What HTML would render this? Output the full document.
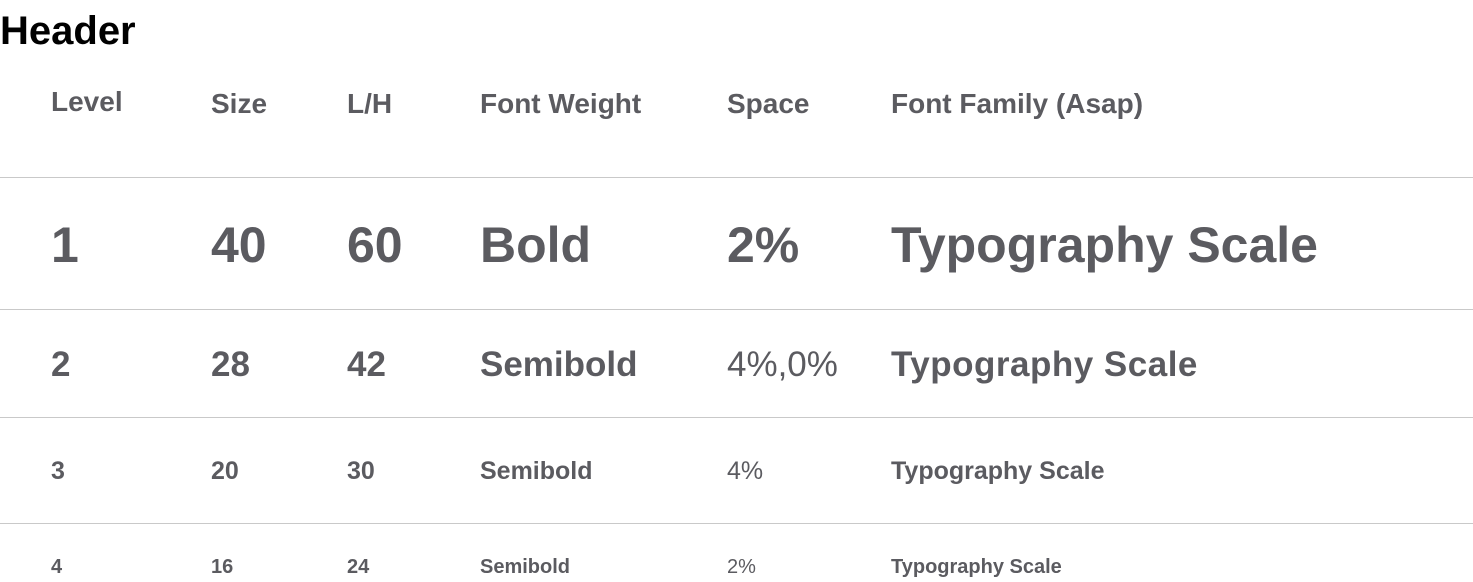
<!DOCTYPE html>
<html><head><meta charset="utf-8"><style>
html,body{margin:0;padding:0;background:#fff;width:1473px;height:582px;overflow:hidden;position:relative;font-family:"Liberation Sans",sans-serif;}
.t{position:absolute;white-space:nowrap;line-height:1.149;font-weight:bold;color:#5b5b60;}
.l{position:absolute;left:0;width:1473px;height:1px;background:#c9c9c9;}
</style></head><body>
<div class="t" style="left:0;top:9px;font-size:40px;color:#000">Header</div>
<div class="l" style="top:177px"></div>
<div class="l" style="top:309px"></div>
<div class="l" style="top:417px"></div>
<div class="l" style="top:523px"></div>
<!-- header row -->
<div style="position:absolute;top:88px;left:0;font-size:28px">
<div class="t" style="left:51px;top:-2px">Level</div>
<div class="t" style="left:211px">Size</div>
<div class="t" style="left:347px">L/H</div>
<div class="t" style="left:480px">Font Weight</div>
<div class="t" style="left:727px">Space</div>
<div class="t" style="left:891px">Font Family (Asap)</div>
</div>
<div style="position:absolute;top:217px;left:0;font-size:50px">
<div class="t" style="left:51px">1</div>
<div class="t" style="left:211px">40</div>
<div class="t" style="left:347px">60</div>
<div class="t" style="left:480px">Bold</div>
<div class="t" style="left:727px">2%</div>
<div class="t" style="left:891px">Typography Scale</div>
</div>
<div style="position:absolute;top:345px;left:0;font-size:35px">
<div class="t" style="left:51px">2</div>
<div class="t" style="left:211px">28</div>
<div class="t" style="left:347px">42</div>
<div class="t" style="left:480px">Semibold</div>
<div class="t" style="left:727px;font-weight:normal">4%,0%</div>
<div class="t" style="left:891px;letter-spacing:0.5px">Typography Scale</div>
</div>
<div style="position:absolute;top:457px;left:0;font-size:25px">
<div class="t" style="left:51px">3</div>
<div class="t" style="left:211px">20</div>
<div class="t" style="left:347px">30</div>
<div class="t" style="left:480px">Semibold</div>
<div class="t" style="left:727px;font-weight:normal">4%</div>
<div class="t" style="left:891px">Typography Scale</div>
</div>
<div style="position:absolute;top:556px;left:0;font-size:20px">
<div class="t" style="left:51px">4</div>
<div class="t" style="left:211px">16</div>
<div class="t" style="left:347px">24</div>
<div class="t" style="left:480px">Semibold</div>
<div class="t" style="left:727px;font-weight:normal">2%</div>
<div class="t" style="left:891px">Typography Scale</div>
</div>
</body></html>
